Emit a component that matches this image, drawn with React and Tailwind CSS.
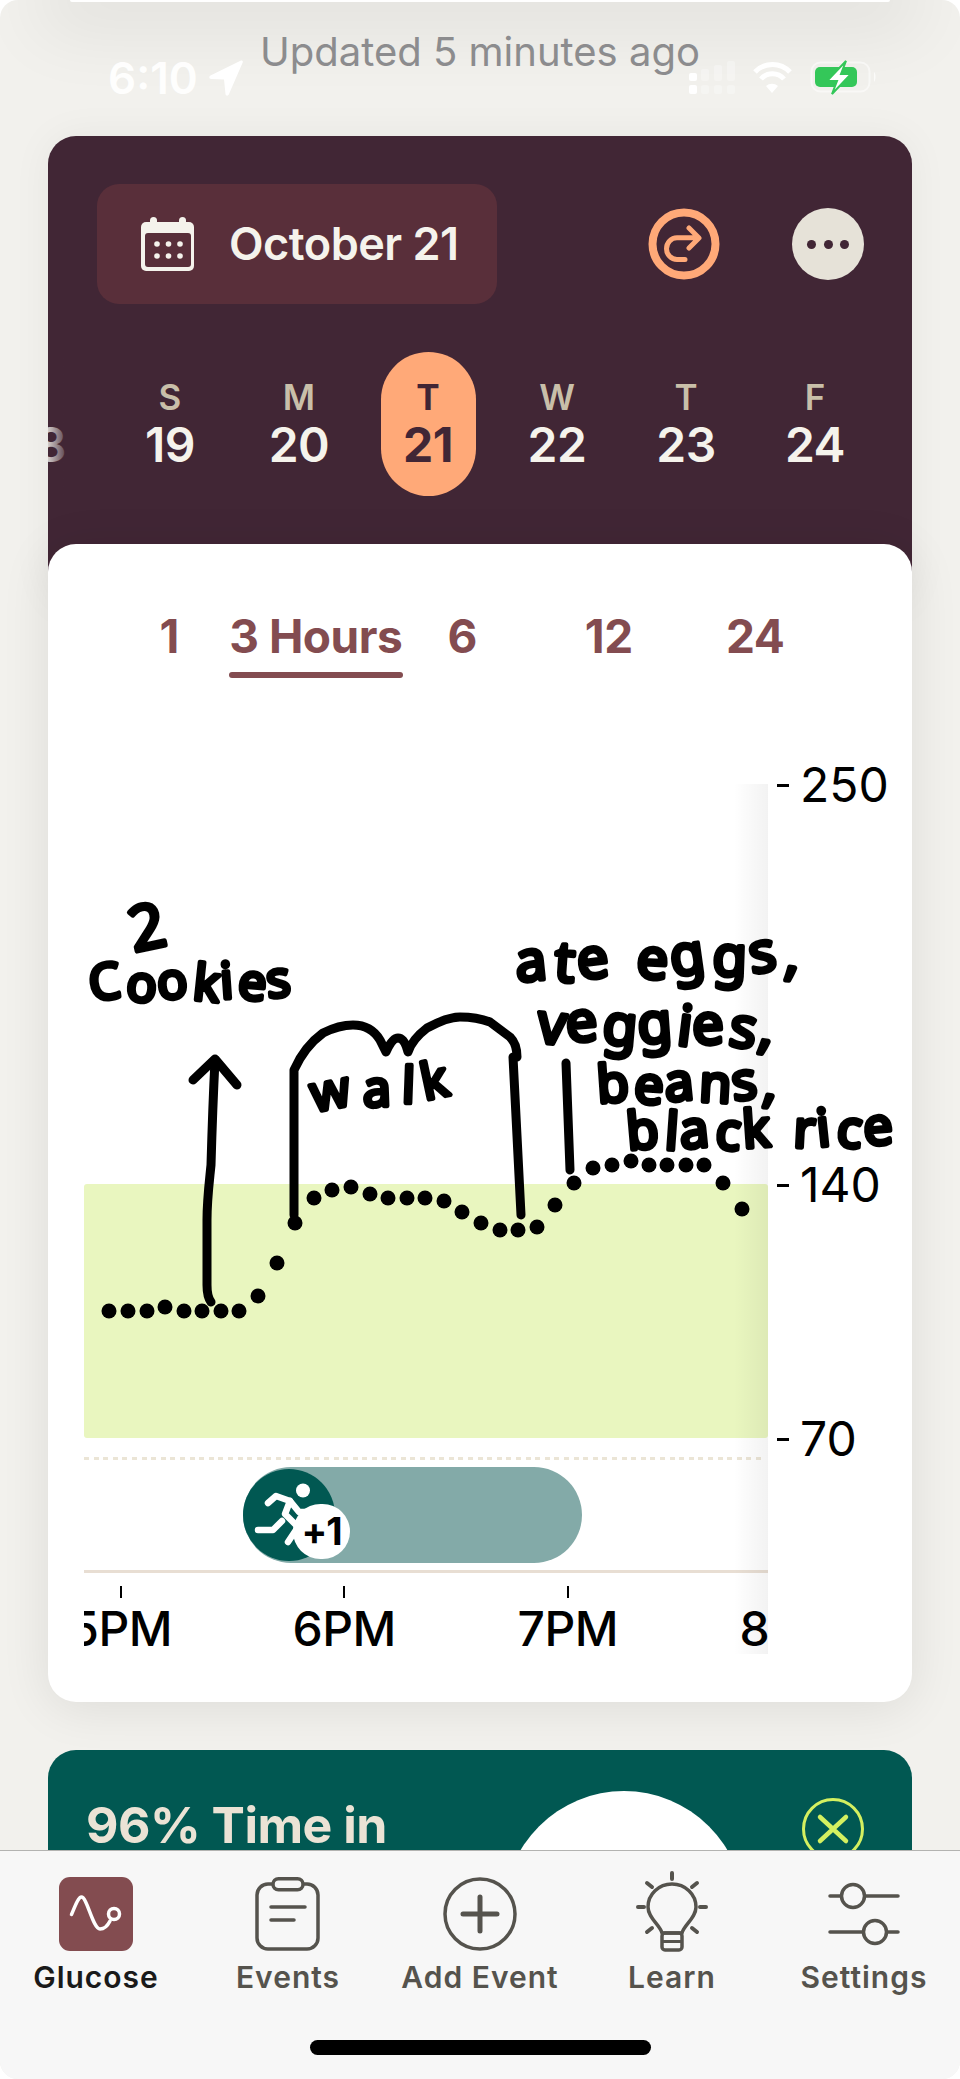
import React from 'react';

const days = [
  { letter: '\u00a0', num: '18' },
  { letter: 'S', num: '19' },
  { letter: 'M', num: '20' },
  { letter: 'T', num: '21', active: true },
  { letter: 'W', num: '22' },
  { letter: 'T', num: '23' },
  { letter: 'F', num: '24' },
];

const ranges = ['1', '3 Hours', '6', '12', '24'];

const axis = [
  { label: '250', gap: 'mb-[360px]' },
  { label: '140', gap: 'mb-[214px]' },
  { label: '70', gap: '' },
];

const hours = ['5PM', '6PM', '7PM', '8PM'];

// glucose readings, in page coordinates
const dots = [
  [109, 1311], [128, 1311], [147, 1311], [165, 1307], [184, 1311], [202, 1311], [221, 1311], [239, 1311],
  [258, 1296], [277, 1263], [295, 1223], [314, 1198], [332, 1190], [351, 1187], [370, 1194], [388, 1198],
  [407, 1198], [425, 1198], [444, 1201], [462, 1212], [481, 1223], [500, 1230], [518, 1230], [537, 1227],
  [555, 1205], [574, 1183], [593, 1168], [612, 1165], [631, 1161], [649, 1165], [667, 1165], [686, 1165],
  [704, 1165], [723, 1183], [742, 1209],
];

// hand written notes on top of the chart
const notes = [
  { text: '2', x: 134, y: 952, size: 62, len: 48, rotate: -4, tilt: '-8' },
  { text: 'Cookies', x: 91, y: 1001, size: 50, len: 201, rotate: -1, tilt: '-6 5 -4 7 -3 6 -5' },
  { text: 'walk', x: 314, y: 1112, size: 50, len: 138, rotate: -6, tilt: '-5 4 8 -6' },
  { text: 'ate eggs,', x: 517, y: 982, size: 56, len: 282, rotate: -2, tilt: '-4 6 -5 0 5 -6 4 -7 8' },
  { text: 'veggies,', x: 536, y: 1042, size: 56, len: 236, rotate: 1, tilt: '5 -6 4 -5 6 -4 7 8' },
  { text: 'beans,', x: 598, y: 1103, size: 52, len: 178, rotate: -1, tilt: '-3 5 -5 4 -6 8' },
  { text: 'black rice', x: 628, y: 1150, size: 52, len: 266, rotate: -1, tilt: '-4 5 -5 6 -3 0 4 -5 6 -4' },
];

function CalendarIcon() {
  return (
    <svg width="54" height="56" viewBox="0 0 54 56" className="shrink-0">
      <rect x="0" y="6" width="53" height="49" rx="5" fill="#f5f3ec" />
      <rect x="9" y="1" width="7" height="10" rx="3.5" fill="#f5f3ec" />
      <rect x="38" y="1" width="7" height="10" rx="3.5" fill="#f5f3ec" />
      <rect x="4" y="17" width="46" height="34" rx="3" fill="#592f3a" />
      {[16, 27.5, 39].map((cx) => (
        <React.Fragment key={cx}>
          <circle cx={cx} cy="28" r="2.8" fill="#f5f3ec" />
          <circle cx={cx} cy="40" r="2.8" fill="#f5f3ec" />
        </React.Fragment>
      ))}
    </svg>
  );
}

function JumpIcon() {
  return (
    <svg width="72" height="72" viewBox="0 0 72 72" fill="none" stroke="#ffa978" strokeLinecap="round" strokeLinejoin="round">
      <circle cx="36" cy="36" r="31.5" strokeWidth="8" />
      <path d="M37 51.5H29a10.5 10.85 0 0 1 0-21.7H50M41 20l10 10-10 10" strokeWidth="5" />
    </svg>
  );
}

function StatusBar() {
  return (
    <>
      <div className="absolute top-[31px] left-0 w-[960px] text-center font-['Inter'] text-[40px] leading-[42px] text-[#8c8c8e]">
        Updated 5 minutes ago
      </div>
      <div className="absolute top-[55px] left-[108px] flex items-center gap-[11px] font-['Inter'] text-[44px] leading-[46px] font-semibold text-white/95">
        <span>6:10</span>
        <svg width="34" height="36" viewBox="0 0 34 36" fill="#fff">
          <path d="M32 .5L1.500 15.500c-2 1-1.400 3.500.8 3.500L15 19.500l1.500 14.500c.2 2 2.500 2.300 3.300.6L33.700 2.500c.5-1.300-.5-2.500-1.700-2z" />
        </svg>
      </div>
      <svg className="absolute top-[58px] left-[686px]" width="192" height="38" viewBox="686 58 192 38">
        <g fill="#fff">
          <rect x="689" y="73" width="8" height="8" rx="2" />
          <rect x="689" y="85" width="8" height="9" rx="2" />
          <g opacity="0.3">
            <rect x="701" y="69" width="8" height="12" rx="2" />
            <rect x="714" y="65" width="8" height="16" rx="2" />
            <rect x="727" y="61" width="8" height="20" rx="2" />
            <rect x="701" y="85" width="8" height="9" rx="2" />
            <rect x="714" y="85" width="8" height="9" rx="2" />
            <rect x="727" y="85" width="8" height="9" rx="2" />
          </g>
        </g>
        <g fill="none" stroke="#fff" strokeWidth="5">
          <path d="M755 72a24 24 0 0 1 35 0" />
          <path d="M761 79a15 15 0 0 1 23 0" />
        </g>
        <path d="M766 86a9 9 0 0 1 12 0l-6 7z" fill="#fff" />
        <rect x="811.500" y="62.500" width="58" height="29" rx="9" fill="none" stroke="#fff" strokeOpacity="0.5" strokeWidth="2" />
        <rect x="815" y="67" width="42" height="20" rx="5" fill="#34c759" />
        <path d="M874 72c2 1 2 8 0 10z" fill="#fff" opacity="0.7" />
        <path d="M846 61l-19 20h10l-5 13 19-20h-10z" fill="#fff" stroke="#34c759" strokeWidth="2" />
      </svg>
    </>
  );
}

function DayPicker() {
  return (
    <div className="relative mt-[48px] overflow-hidden">
      <div className="-ml-[71.5px] flex">
        {days.map((d) => (
          <div key={d.num} className="flex w-[129px] shrink-0 justify-center font-['Inter'] font-semibold">
            <div className={`flex h-[144px] w-[95px] flex-col items-center pt-[25px] ${d.active ? 'rounded-[48px] bg-[#ffa978] font-bold' : ''}`}>
              <span className={`text-[35px] leading-[40px] ${d.active ? 'text-[#412635]' : 'text-[#c9bfa9]'}`}>{d.letter}</span>
              <span className={`text-[48px] leading-[56px] tracking-[-0.5px] ${d.active ? 'text-[#412635]' : 'text-[#f5f3ec]'}`}>{d.num}</span>
            </div>
          </div>
        ))}
      </div>
      <div className="absolute top-0 bottom-0 left-0 w-[22px] bg-linear-to-r from-[#412635]/20 to-[#412635]" />
    </div>
  );
}

function RangeTabs() {
  return (
    <div className="grid grid-cols-[repeat(5,146.5px)] pt-[66px] pl-[48px] font-['Inter'] text-[46px] leading-[52px] font-bold text-[#834c50]">
      {ranges.map((r) => (
        <div key={r} className="flex flex-col items-center">
          <span className="whitespace-nowrap tracking-[-0.5px]">{r}</span>
          {r === '3 Hours' && <div className="mt-[10px] h-[6px] w-[174px] rounded-[3px] bg-[#834c50]" />}
        </div>
      ))}
    </div>
  );
}

function ActivityPill() {
  return (
    <div className="relative mt-[7px] ml-[159px] flex h-[96px] w-[339px] items-center rounded-[48px] bg-[#83aaa8]">
      <div className="h-[92px] w-[92px] rounded-full bg-[#015852]">
        <svg width="92" height="92" viewBox="243 1470 92 92" fill="none" stroke="#fff" strokeWidth="6.500" strokeLinecap="round" strokeLinejoin="round">
          <circle cx="303" cy="1491.500" r="7" fill="#fff" stroke="none" />
          <path d="M268 1504l8-7 14 5-5 13 13 13-10 15" />
          <path d="M290 1502l9 11h9" />
          <path d="M282 1522l-9 9h-15" />
        </svg>
      </div>
      <div className="absolute top-[37px] left-[50px] flex h-[55px] w-[57px] items-center justify-center rounded-full bg-white font-['Inter'] text-[38px] font-bold tracking-[-1px] text-black">
        +1
      </div>
    </div>
  );
}

function Chart() {
  return (
    <div className="mt-[106px] ml-[36px] flex">
      <div className="relative h-[870px] w-[684px] overflow-hidden">
        <div className="mt-[400px] h-[254px] rounded-[3px] bg-[#e9f6bf]" />
        <div className="mt-[19px] h-[3px] w-[678px] bg-[repeating-linear-gradient(90deg,#ebe5d6_0_5px,transparent_5px_9.600px)]" />
        <ActivityPill />
        <div className="mt-[7px] h-[3px] bg-[#e8ded3]" />
        <div className="-ml-[75px] flex">
          {hours.map((h) => (
            <div key={h} className="flex w-[223.500px] shrink-0 flex-col items-center">
              <div className="mt-[13px] h-[12px] w-[2px] bg-black" />
              <span className="mt-[3px] font-['Inter'] text-[48px] leading-[56px] font-medium tracking-[-0.5px] text-black">{h}</span>
            </div>
          ))}
        </div>
        <div className="absolute top-0 right-0 bottom-0 w-[34px] bg-linear-to-l from-black/5 to-transparent" />
      </div>
      <div className="-mt-[19px] ml-[9px] flex flex-col font-['Inter'] text-[48px] leading-[40px] text-black">
        {axis.map((a) => (
          <div key={a.label} className={`flex h-[40px] items-center ${a.gap}`}>
            <div className="mr-[11px] h-[3px] w-[12px] bg-black" />
            <span>{a.label}</span>
          </div>
        ))}
      </div>
    </div>
  );
}

function Scribbles() {
  return (
    <svg className="pointer-events-none absolute top-0 left-0" width="864" height="1158" viewBox="48 544 864 1158" fill="none">
      {dots.map(([cx, cy]) => (
        <circle key={cx} cx={cx} cy={cy} r="7.500" fill="#000" />
      ))}
      <g stroke="#000" strokeWidth="9" strokeLinecap="round" strokeLinejoin="round">
        <path d="M215 1060C213 1100 212 1130 211 1165C209 1185 207 1200 207 1220L207 1285C207 1293 208 1298 211 1302" />
        <path d="M193 1080L215 1059L237 1085" />
        <path d="M294 1215L294 1070C302 1052 312 1041 323 1033C333 1028 345 1025 353 1025C365 1025 374 1030 380 1040L386 1052C390 1043 394 1038 398 1038C403 1038 406 1044 408 1052C410 1046 414 1038 427 1028C440 1021 450 1017 460 1017C473 1017 482 1019 490 1022L510 1037C515 1042 517 1048 517 1057" />
        <path d="M513 1057L521 1215" />
        <path d="M566 1063L570 1170" />
      </g>
      {notes.map((n) => (
        <text
          key={n.text}
          x={n.x}
          y={n.y}
          rotate={n.tilt}
          fontFamily="'Noto Sans', sans-serif"
          fontSize={n.size}
          fill="#000"
          stroke="#000"
          strokeWidth="4.500"
          strokeLinejoin="round"
          textLength={n.len}
          lengthAdjust="spacing"
          transform={`rotate(${n.rotate} ${n.x} ${n.y})`}
        >
          {n.text}
        </text>
      ))}
    </svg>
  );
}

function GlucoseIcon() {
  return (
    <svg width="74" height="74" viewBox="0 0 74 74" fill="none">
      <rect width="74" height="74" rx="11" fill="#834c50" />
      <g stroke="#fff" strokeWidth="3.500" strokeLinecap="round">
        <path d="M12.500 37.500C15 32 19 20 22.500 20C28 20 34 52 41 52C46 52 49 48 51 44" />
        <circle cx="55" cy="37" r="5.500" />
      </g>
    </svg>
  );
}

function EventsIcon() {
  return (
    <svg width="74" height="74" viewBox="0 0 74 74" fill="none" stroke="#55534d" strokeWidth="3.500" strokeLinecap="round">
      <rect x="6" y="7" width="61" height="65" rx="11" />
      <rect x="22" y="1.750" width="30" height="11" rx="5.500" fill="#f7f7f7" />
      <path d="M20 30H54M20 43H43" />
    </svg>
  );
}

function AddIcon() {
  return (
    <svg width="74" height="74" viewBox="0 0 74 74" fill="none" stroke="#55534d" strokeLinecap="round">
      <circle cx="37" cy="37" r="35" strokeWidth="3.500" />
      <path d="M37 20V54M20 37H54" strokeWidth="5" />
    </svg>
  );
}

function LearnIcon() {
  return (
    <svg width="80" height="84" viewBox="0 0 80 84" fill="none" stroke="#55534d" strokeWidth="3.500" strokeLinecap="round" strokeLinejoin="round" className="-mt-[7px] -mb-[3px]">
      <path d="M30 63C28 55 16 48 16 37A24 23 0 0 1 64 37C64 48 52 55 50 63Z" />
      <rect x="30" y="63" width="20" height="17" rx="3" />
      <path d="M31 71.500H49" strokeWidth="3" />
      <path d="M40 3V9M6 37H12M68 37H74M15 13L20 17M65 13L60 17M15 62L20 58M65 62L60 58" strokeWidth="4" />
    </svg>
  );
}

function SettingsIcon() {
  return (
    <svg width="80" height="74" viewBox="0 0 80 74" fill="none" stroke="#55534d" strokeWidth="3.500" strokeLinecap="round">
      <path d="M6 19H17M41 19H74M6 55H39M63 55H74" />
      <circle cx="29" cy="19" r="11.500" />
      <circle cx="51" cy="55" r="11.500" />
    </svg>
  );
}

const navItems = [
  { label: 'Glucose', icon: <GlucoseIcon />, active: true },
  { label: 'Events', icon: <EventsIcon /> },
  { label: 'Add Event', icon: <AddIcon /> },
  { label: 'Learn', icon: <LearnIcon /> },
  { label: 'Settings', icon: <SettingsIcon /> },
];

function TabBar() {
  return (
    <div className="flex h-[229px] flex-col border-t border-[#b3b3b1] bg-[#f7f7f7]">
      <div className="grid grid-cols-5 pt-[26px]">
        {navItems.map((item) => (
          <div key={item.label} className="flex flex-col items-center">
            {item.icon}
            <span className={`mt-[8px] whitespace-nowrap font-['Inter'] text-[30px] leading-[36px] font-semibold tracking-[1px] ${item.active ? 'text-[#1a1a1a]' : 'text-[#55534d]'}`}>
              {item.label}
            </span>
          </div>
        ))}
      </div>
      <div className="mx-auto mt-auto mb-[24px] h-[15px] w-[341px] rounded-[8px] bg-black" />
    </div>
  );
}

export default function App() {
  return (
    <div className="h-[2079px] w-[960px] bg-white">
      <div className="relative h-full overflow-hidden rounded-[18px] bg-[#f2f1ed]">
        <div className="absolute top-0 left-[70px] h-[2px] w-[820px] rounded-b-[2px] bg-white shadow-[0_0_70px_30px_rgba(0,0,0,0.07)]" />
        <div className="relative h-[1850px] overflow-hidden px-[48px] pt-[136px]">
          <div className="h-[470px] overflow-hidden rounded-[28px] bg-[#412635] pt-[48px] shadow-[0_0_40px_rgba(0,0,0,0.05)]">
            <div className="flex items-center justify-between pr-[48px] pl-[49px]">
              <div className="flex h-[120px] w-[400px] items-center gap-[34px] rounded-[22px] bg-[#592f3a] pl-[44px]">
                <CalendarIcon />
                <span className="font-['Inter'] text-[45px] font-semibold tracking-[-0.5px] text-[#f5f3ec]">October 21</span>
              </div>
              <div className="flex items-center gap-[72px]">
                <JumpIcon />
                <div className="flex h-[72px] w-[72px] items-center justify-center gap-[7.500px] rounded-full bg-[#e6e2d8]">
                  <div className="h-[9px] w-[9px] rounded-full bg-[#412635]" />
                  <div className="h-[9px] w-[9px] rounded-full bg-[#412635]" />
                  <div className="h-[9px] w-[9px] rounded-full bg-[#412635]" />
                </div>
              </div>
            </div>
            <DayPicker />
          </div>

          <div className="relative -mt-[62px] h-[1158px] rounded-[28px] bg-white shadow-[0_6px_50px_rgba(0,0,0,0.09)]">
            <RangeTabs />
            <Chart />
            <Scribbles />
          </div>

          <div className="relative mt-[48px] h-[300px] rounded-[28px] bg-[#015852] pt-[47px] pl-[38px]">
            <h2 className="font-['Inter'] text-[50px] leading-[56px] font-bold tracking-[-0.5px] text-[#ebe3d5]">96% Time in</h2>
            <div className="absolute top-[41px] left-[456px] h-[240px] w-[240px] rounded-full bg-white" />
            <svg className="absolute top-[48px] right-[48px]" width="62" height="62" viewBox="0 0 62 62" fill="none" stroke="#d4f060" strokeLinecap="round">
              <circle cx="31" cy="31" r="29.500" strokeWidth="3" />
              <path d="M18 19L44 43M44 19L18 43" strokeWidth="4.500" />
            </svg>
          </div>
        </div>
        <TabBar />
        <StatusBar />
      </div>
    </div>
  );
}
